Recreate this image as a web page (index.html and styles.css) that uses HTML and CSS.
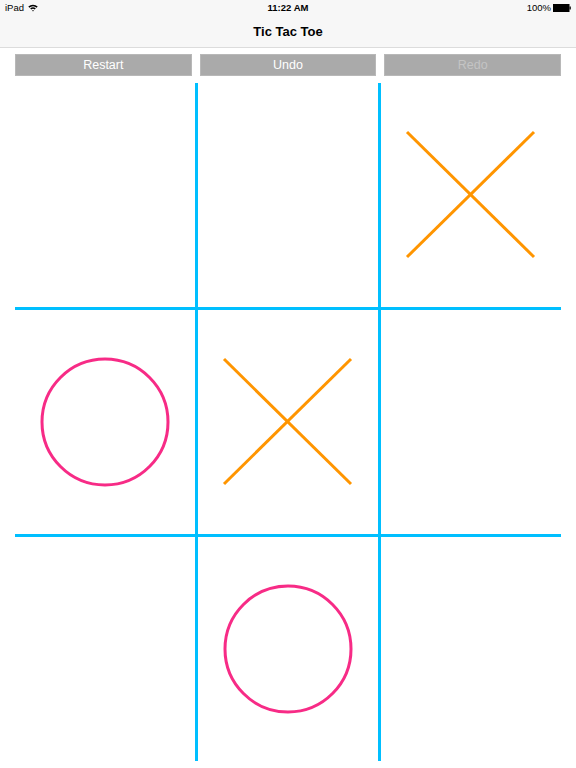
FILE: index.html
```html
<!DOCTYPE html>
<html>
<head>
<meta charset="utf-8">
<link rel="stylesheet" href="styles.css">
</head>
<body>
<header class="header">
  <div class="status">
    <div class="status-left">
      <span>iPad</span>
      <svg class="wifi" width="10" height="8" viewBox="0 0 10 8">
        <path d="M0.3 2.6 A6.6 6.6 0 0 1 9.7 2.6 L8.6 3.7 A5 5 0 0 0 1.4 3.7 Z" fill="#000"/>
        <path d="M2.2 4.5 A4 4 0 0 1 7.8 4.5 L6.7 5.6 A2.4 2.4 0 0 0 3.3 5.6 Z" fill="#000"/>
        <path d="M4.1 6.4 A1.3 1.3 0 0 1 5.9 6.4 L5 7.4 Z" fill="#000"/>
      </svg>
    </div>
    <div class="status-time">11:22 AM</div>
    <div class="status-right">
      <span>100%</span>
      <svg class="battery" width="18" height="8" viewBox="0 0 18 8">
        <rect x="0.5" y="0.5" width="15.5" height="7" fill="#000" stroke="#000" stroke-width="1"/>
        <rect x="16.5" y="2.5" width="1.3" height="3" fill="#000"/>
      </svg>
    </div>
  </div>
  <div class="nav">Tic Tac Toe</div>
</header>
<div class="toolbar">
  <button class="btn">Restart</button>
  <button class="btn">Undo</button>
  <button class="btn btn-disabled">Redo</button>
</div>
<div class="board">
  <div class="cell"></div>
  <div class="cell"></div>
  <div class="cell">
    <svg class="mark" width="128" height="128" viewBox="0 0 128 128">
      <line x1="0" y1="1" x2="127" y2="126" class="x-line"/>
      <line x1="127" y1="1" x2="0" y2="126" class="x-line"/>
    </svg>
  </div>
  <div class="cell">
    <svg class="mark" width="128" height="128" viewBox="0 0 128 128">
      <circle cx="64" cy="64" r="63" class="o-ring"/>
    </svg>
  </div>
  <div class="cell">
    <svg class="mark" width="128" height="128" viewBox="0 0 128 128">
      <line x1="0" y1="1" x2="127" y2="126" class="x-line"/>
      <line x1="127" y1="1" x2="0" y2="126" class="x-line"/>
    </svg>
  </div>
  <div class="cell"></div>
  <div class="cell"></div>
  <div class="cell">
    <svg class="mark" width="128" height="128" viewBox="0 0 128 128">
      <circle cx="64" cy="64" r="63" class="o-ring"/>
    </svg>
  </div>
  <div class="cell"></div>
</div>
</body>
</html>
```

FILE: styles.css
```css
html, body {
  margin: 0;
  padding: 0;
  background: #ffffff;
  font-family: "Liberation Sans", Arial, sans-serif;
  color: #000;
}

.header {
  background: #f7f7f7;
  border-bottom: 1px solid #dcdcdc;
  height: 48px;
  box-sizing: border-box;
}

.status {
  height: 15px;
  display: grid;
  grid-template-columns: 1fr auto 1fr;
  align-items: center;
  padding: 0 5px;
  font-size: 9.5px;
}

.status-left {
  display: flex;
  align-items: center;
  gap: 4px;
}

.status-time {
  font-weight: bold;
  font-size: 9.5px;
}

.status-right {
  display: flex;
  align-items: center;
  justify-content: flex-end;
  gap: 2px;
}

.wifi, .battery {
  display: block;
}

.nav {
  height: 32px;
  display: flex;
  align-items: center;
  justify-content: center;
  font-size: 13px;
  font-weight: bold;
}

.toolbar {
  display: grid;
  grid-template-columns: repeat(3, 1fr);
  gap: 8px;
  padding: 6px 15px 0 15px;
  height: 22px;
}

.btn {
  margin: 0;
  border: 1px solid #b8b8b8;
  background: #aaaaaa;
  color: #ffffff;
  font-family: "Liberation Sans", Arial, sans-serif;
  font-size: 12.5px;
  height: 22px;
  padding: 0;
}

.btn-disabled {
  color: #c4c4c4;
}

.board {
  margin: 7px 15px 0 15px;
  height: 678px;
  display: grid;
  grid-template-columns: repeat(3, 1fr);
  grid-template-rows: repeat(3, 1fr);
  gap: 3px;
  background: #00bfff;
}

.cell {
  background: #ffffff;
  display: flex;
  align-items: center;
  justify-content: center;
}

.mark {
  display: block;
  overflow: visible;
}

.x-line {
  stroke: #ff9500;
  stroke-width: 3;
}

.o-ring {
  fill: none;
  stroke: #f72b86;
  stroke-width: 3;
}
```
